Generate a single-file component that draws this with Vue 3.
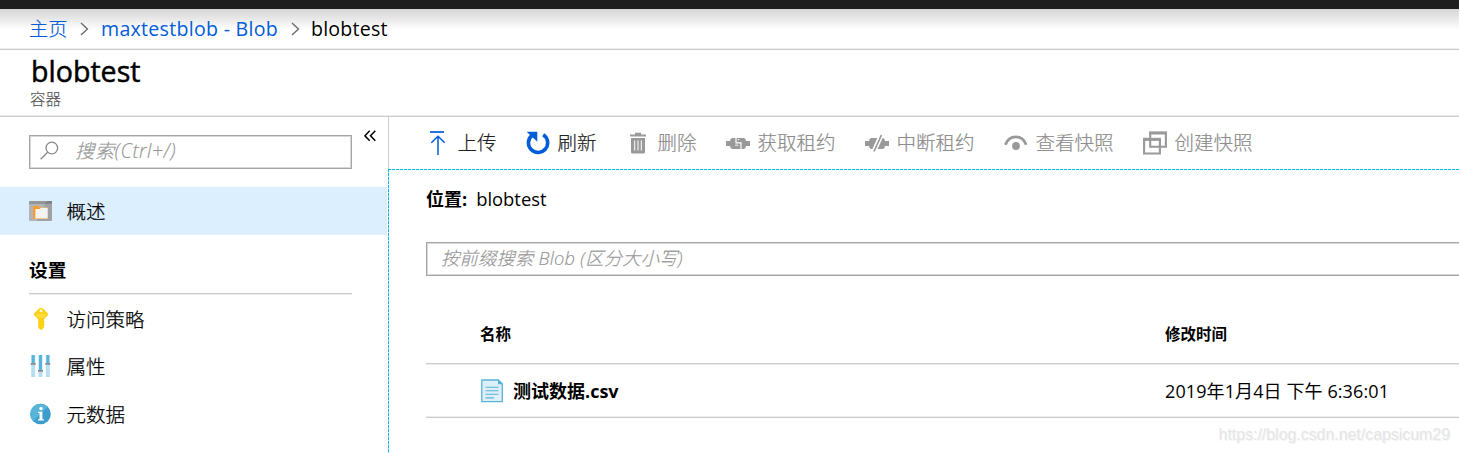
<script setup>
const actions = [
  { icon: 'upload', label: '上传', enabled: true },
  { icon: 'refresh', label: '刷新', enabled: true },
  { icon: 'trash', label: '删除' },
  { icon: 'lease', label: '获取租约' },
  { icon: 'break', label: '中断租约' },
  { icon: 'eye', label: '查看快照' },
  { icon: 'copy', label: '创建快照' },
]
const settings = [
  { icon: 'key', label: '访问策略' },
  { icon: 'sliders', label: '属性' },
  { icon: 'info', label: '元数据' },
]
</script>

<template>
  <div class="page">
    <div class="topbar"></div>
    <nav class="crumbs">
      <a class="c1">主页</a>
      <svg class="chev" width="9" height="14" viewBox="0 0 9 14"><path d="M1 1l6.500 6L1 13" /></svg>
      <a class="c2">maxtestblob - Blob</a>
      <svg class="chev" width="9" height="14" viewBox="0 0 9 14"><path d="M1 1l6.500 6L1 13" /></svg>
      <span class="c3">blobtest</span>
    </nav>
    <header class="head">
      <h1>blobtest</h1>
      <div class="sub">容器</div>
    </header>
    <div class="body">
      <aside class="side">
        <div class="searchrow">
          <div class="search">
            <svg width="20" height="20" viewBox="0 0 20 20"><circle cx="11.800" cy="7" r="5.800" /><path d="M7.600 11.200L.6 18.200" /></svg>
            <span class="ph">搜索(Ctrl+/)</span>
          </div>
          <svg class="collapse" width="12" height="12" viewBox="0 0 12 12"><path d="M5.700.7L.9 5.800l4.800 5M11.300.7L6.500 5.800l4.800 5" /></svg>
        </div>
        <div class="item active">
          <svg class="mi" width="24" height="24" viewBox="0 0 24 24">
            <rect x=".3" y="2" width="22.700" height="20" rx="1" fill="#a0a1a2" />
            <path d="M.3 4.500h16L8 22H1.300a1 1 0 0 1-1-1z" fill="#b3b4b5" />
            <path d="M1.300 2h20.700a1 1 0 0 1 1 1v1.700H.3V3a1 1 0 0 1 1-1z" fill="#7f8081" />
            <path d="M1.300 2h17l-2.500 2.700H.3V3a1 1 0 0 1 1-1z" fill="#959697" />
            <path d="M4.300 7h5l1.200 1.500H18V20H4.300z" fill="#ff9a24" />
            <path d="M6.500 10h4.200l1.300-1.200h6.700V19.500H6.200z" fill="#f3f3f3" />
          </svg>
          <span>概述</span>
        </div>
        <div class="section">设置</div>
        <div v-for="s in settings" :key="s.icon" class="item menu">
          <svg v-if="s.icon === 'key'" class="mi" width="24" height="24" viewBox="0 0 24 24">
            <path d="M12 1c1.200 0 2 .5 2.800 1.300L18.500 6c.8.9.8 1.800 0 2.600L14.900 12.500V14l.9 1-.9 1.200.9 1.200-.9 1.200v2.300L12.200 23 9.200 21V12.500L5.500 8.600c-.8-.8-.8-1.700 0-2.600L9.200 2.300C10 1.500 10.800 1 12 1z" fill="#fcd116" />
            <circle cx="12" cy="3.900" r="1.400" fill="#fff" />
            <path d="M7.800 7.800h8.400M7.800 9.800h8.400" stroke="#fee87a" stroke-width=".8" />
          </svg>
          <svg v-else-if="s.icon === 'sliders'" class="mi" width="24" height="24" viewBox="0 0 24 24">
            <path d="M2.200 1h4v22h-4zM9.500 1h4v22h-4zM16.800 1h4v22h-4z" fill="#b8dff0" />
            <path d="M2.700 1h3v8h-3zM10 1h3v15h-3zM17.300 1h3v8h-3z" fill="#59b4d9" />
            <path d="M1.700 9h5v1.800h-5zM9 16h5v1.800H9zM16.300 9h5v1.800h-5z" fill="#8b8c8d" />
          </svg>
          <svg v-else class="mi" width="24" height="24" viewBox="0 0 24 24">
            <circle cx="11.500" cy="12" r="10.300" fill="#3c9ccb" />
            <path d="M4.200 19.300A10.300 10.300 0 0 1 18.800 4.700z" fill="#59b4d9" />
            <circle cx="12" cy="6.500" r="1.700" fill="#fff" />
            <path d="M9 9.700h4.400v7.500h1.500v1.400H9v-1.400h1.500v-6.100H9z" fill="#fff" />
          </svg>
          <span>{{ s.label }}</span>
        </div>
      </aside>
      <main class="main">
        <div class="toolbar">
          <div v-for="a in actions" :key="a.icon" class="act" :class="{ on: a.enabled }">
            <svg width="24" height="24" viewBox="0 0 24 24">
              <g v-if="a.icon === 'upload'" fill="none" stroke="#015cda">
                <path d="M4 1h14" stroke-width="1.700" />
                <path d="M12 24V5.500M5.300 11.700L12 5.200l6.700 6.500" stroke-width="1.500" />
              </g>
              <g v-else-if="a.icon === 'refresh'">
                <path d="M17.200 3.800A9.600 9.600 0 1 1 6.200 4.300" fill="none" stroke="#015cda" stroke-width="3.600" />
                <path d="M.6.700h10.700v10z" fill="#015cda" />
              </g>
              <g v-else-if="a.icon === 'trash'">
                <path d="M4 3.500h16v2H4zM9 1.700h6v1.800H9z" />
                <path d="M5 7h14v14a1.500 1.500 0 0 1-1.500 1.500h-11A1.500 1.500 0 0 1 5 21z" />
                <path d="M8.700 9.500v10M12 9.500v10M15.300 9.500v10" stroke="#fff" stroke-width="1" />
              </g>
              <g v-else-if="a.icon === 'lease'">
                <path d="M0 10h4.200V8.500L6 7h12l1.800 1.500V10H24v5h-4.200v1.500L18 18H6l-1.800-1.500V15H0z" />
                <path d="M10 6v5.800h5V18.500" fill="none" stroke="#fff" stroke-width="1.200" />
                <path d="M11.700 8.600h1.600M9.200 14.200h3" stroke="#fff" stroke-width="1" />
              </g>
              <g v-else-if="a.icon === 'break'">
                <path d="M0 10h4.200V8.500L6 7h12l1.800 1.500V10H24v5h-4.200v1.500L18 18H6l-1.800-1.500V15H0z" />
                <path d="M16.700 3L8.700 21" stroke="#fff" stroke-width="4.800" />
                <path d="M16.500 4L9 20.500" stroke="#999" stroke-width="1.700" />
              </g>
              <g v-else-if="a.icon === 'eye'">
                <path d="M1.300 13.700C5.300 3.200 18.200 3.200 22.200 13.700" fill="none" stroke="#999" stroke-width="2.800" />
                <circle cx="12" cy="15" r="3.900" />
              </g>
              <g v-else fill="none" stroke="#999" stroke-width="2.100">
                <path d="M7.200 7V1.700H22.900v14h-5.500" /><path d="M6.200 2h17.700" stroke-width="3" />
                <path d="M1.100 8.500h15.800v14H1.100z" /><path d="M0 8.300h17.900" stroke-width="3" />
                <path d="M7.200 9v6.700h10" />
              </g>
            </svg>
            <span>{{ a.label }}</span>
          </div>
        </div>
        <div class="content">
          <div class="loc"><b>位置:</b><span>blobtest</span></div>
          <div class="filter"><span class="ph">按前缀搜索 Blob (区分大小写)</span></div>
          <div class="tr th"><span>名称</span><span class="date">修改时间</span></div>
          <div class="tr td">
            <svg width="24" height="24" viewBox="0 0 24 24">
              <path d="M1.800 1h16.500l4 3.700v18H1.800z" fill="#ddeff7" stroke="#59b4d9" stroke-width="1.300" />
              <path d="M18 .6l4.900 4.600H18z" fill="#59b4d9" />
              <path d="M5.500 8.200h13M5.500 11.700h13M5.500 15.200h13M5.500 18.900h8.500" stroke="#59b4d9" stroke-width="1.100" />
            </svg>
            <b class="file">测试数据.csv</b>
            <span class="date"><span class="stamp">2019年1月4日 下午 6:36:01</span></span>
          </div>
          <div class="mark">https://blog.csdn.net/capsicum29</div>
        </div>
      </main>
    </div>
  </div>
</template>

<style>
body { margin: 0; overflow: hidden; background: #fff; }
</style>
<style scoped>
* { box-sizing: border-box; }
.page { width: 1459px; height: 453px; overflow: hidden; display: flex; flex-direction: column; background: #fff; color: #000; font: 19.5px "Open Sans", "Noto Sans CJK SC", sans-serif; white-space: nowrap; }
svg { flex: none; display: block; }
.topbar { height: 9px; background: #1e1e1e; flex: none; }
.crumbs { height: 41px; flex: none; display: flex; align-items: center; padding-left: 29px; background: linear-gradient(#d5d5d5, #fff 21px); border-bottom: 1px solid #ccc; box-shadow: inset 0 -1px #ececec; line-height: 38px; }
.crumbs a { color: #015cda; }
.c1 { width: 51px; font-size: 19.200px; font-weight: 300; -webkit-text-stroke: .2px; }
.c2 { width: 190px; font-size: 19.600px; letter-spacing: .27px; }
.c3 { font-size: 19.600px; letter-spacing: .2px; }
.chev { fill: none; stroke: #666; stroke-width: 1.300; margin-right: 12px; }
.c2 + .chev { margin-right: 11px; }
.c2 { margin-left: -1px; width: 191px; padding-left: 1px; }
.head { height: 67px; flex: none; padding-left: 31px; border-bottom: 1px solid #ccc; box-shadow: inset 0 -1px #ececec; }
h1 { margin: 0; padding-top: 3px; font-size: 28.600px; line-height: 36px; height: 39px; font-weight: 400; -webkit-text-stroke: .5px #000; }
.sub { margin-left: -1px; font-size: 15.500px; line-height: 20px; color: #555; font-weight: 300; -webkit-text-stroke: .15px; }
.body { flex: 1; display: flex; }
.side { width: 388px; flex: none; }
.searchrow { display: flex; height: 70px; padding: 18px 0 0 29px; }
.search { width: 323px; height: 34px; border: 1px solid #a6a6a6; box-shadow: inset 0 0 0 1px #d8d8d8; display: flex; align-items: center; padding-left: 10px; }
.search svg { fill: none; stroke: #888; stroke-width: 1.300; margin-bottom: 2px; }
.search .ph { margin: -3px 0 0 15px; letter-spacing: .6px; }
.ph { font-style: italic; font-weight: 300; color: #969696; font-size: 19.300px; line-height: 30px; -webkit-text-stroke: .15px; }
.collapse { margin: -5px 0 0 12px; fill: none; stroke: #000; stroke-width: 1.500; }
.item { height: 47.500px; display: flex; align-items: center; padding-left: 29px; }
.item span { margin: -3px 0 0 13.500px; font-weight: 300; -webkit-text-stroke: .25px; }
.active span { margin-top: -2px; }
.menu .mi { margin-top: -2px; }
.active { height: 48px; width: 387px; background: #dcefff; }
.section { margin: 0 0 2px 29px; width: 323px; height: 59px; border-bottom: 1px solid #ccc; box-shadow: 0 1px #ececec; line-height: 70px; font-weight: 700; font-size: 18.700px; }
.main { width: 1071px; display: flex; flex-direction: column; }
.toolbar { height: 52px; flex: none; display: flex; align-items: center; gap: 29px; padding-left: 37px; border-left: 1px solid #ccc; }
.act { display: flex; gap: 8px; align-items: center; color: #8c8c8c; fill: #999; font-weight: 300; }
.act span { margin: -3px .5px 0 -.5px; -webkit-text-stroke: .2px; }
.act svg { margin-top: -1px; }
.act.on { color: #222; }
.content { flex: 1; padding-left: 38px; background: repeating-linear-gradient(90deg, #00b7f5 0 3px, #c5e0ea 3px 4px) 0 0 / 100% 1px no-repeat, repeating-linear-gradient(#00b7f5 0 3px, #c5e0ea 3px 4px) 0 0 / 1px 100% no-repeat; }
.loc { height: 73px; line-height: 60px; font-size: 18px; display: flex; }
.loc span { margin-left: 9px; font-size: 18.400px; }
.filter { height: 34px; border: 1px solid #a6a6a6; border-right: 0; box-shadow: inset 1px 1px #d8d8d8, inset 0 -1px #d8d8d8; padding-left: 14px; display: flex; align-items: center; }
.filter .ph { font-size: 18.300px; letter-spacing: .22px; margin-top: -2px; }
.tr { display: flex; align-items: center; padding-left: 54px; }
.th { height: 88px; border-bottom: 1px solid #ccc; box-shadow: 0 1px #ececec; padding-top: 28px; font-weight: 700; font-size: 15.500px; }
.th > span:first-child { width: 685px; }
.td { height: 54px; border-bottom: 1px solid #ccc; box-shadow: inset 0 -1px #ececec; font-size: 18px; }
.td span, .file { margin-top: -1px; }
.file { width: 652px; margin-left: 9px; }
.stamp { letter-spacing: .1px; font-weight: 400; }
.mark { font: 15.900px/34px "Liberation Sans", sans-serif; color: #e5e5e5; text-align: right; padding-right: 9px; text-shadow: 1px 1px #f4f4f4; }
</style>
